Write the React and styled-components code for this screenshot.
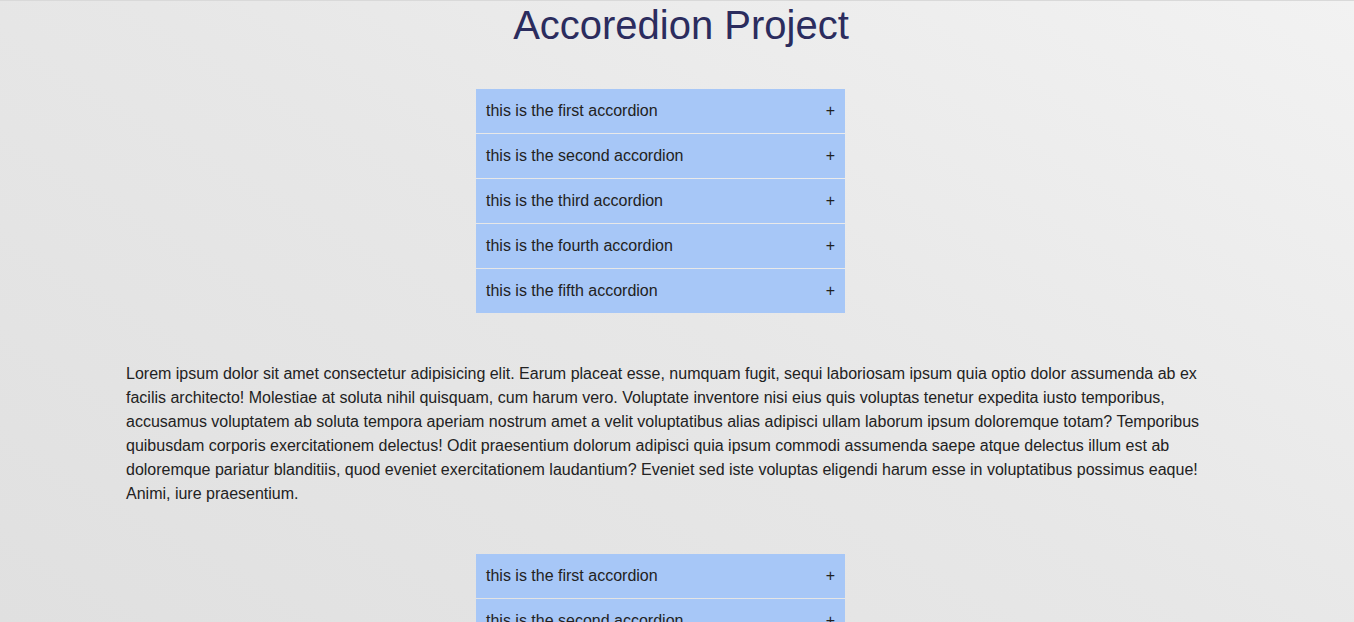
import React, { useState } from "react";
import styled, { createGlobalStyle } from "styled-components";

const GlobalStyle = createGlobalStyle`
  html {
    min-height: 100%;
    background: linear-gradient(30deg, #e0e0e0 0%, #e7e7e7 50%, #f2f2f2 100%);
    background-attachment: fixed;
  }
  body {
    margin: 0;
    border-top: 1px solid #d9d9d9;
    font-family: "Liberation Sans", Arial, sans-serif;
    color: #222;
  }
  ::-webkit-scrollbar {
    width: 4px;
    background: transparent;
  }
  ::-webkit-scrollbar-thumb {
    background: #bdbdbd;
  }
`;

const Page = styled.main`
  padding: 0 126px 60px;
`;

const Title = styled.h1`
  margin: 0;
  padding-left: 8px;
  text-align: center;
  font-size: 40px;
  font-weight: 400;
  line-height: 48px;
  color: #2b2c5e;
`;

const AccordionList = styled.section`
  width: 369px;
  margin: ${(p) => p.$top}px 0 0 350px;
  display: flex;
  flex-direction: column;
  gap: 1px;
`;

const Item = styled.div`
  background: #a7c7f7;
`;

const Header = styled.button`
  width: 100%;
  height: 44px;
  display: flex;
  align-items: center;
  justify-content: space-between;
  padding: 0 10px;
  border: 0;
  background: transparent;
  font-family: inherit;
  font-size: 16px;
  color: #222;
  cursor: pointer;
  text-align: left;
`;

const Sign = styled.span`
  font-size: 16px;
`;

const Body = styled.div`
  padding: 0 10px 12px;
  font-size: 15px;
  line-height: 22px;
`;

const Text = styled.p`
  margin: 49px 0 0;
  font-size: 16px;
  line-height: 24px;
  color: #222;
`;

const names = ["first", "second", "third", "fourth", "fifth"];

function Accordion({ top }) {
  const [open, setOpen] = useState(null);
  return (
    <AccordionList $top={top}>
      {names.map((n, i) => (
        <Item key={n}>
          <Header onClick={() => setOpen(open === i ? null : i)}>
            this is the {n} accordion
            <Sign>{open === i ? "−" : "+"}</Sign>
          </Header>
          {open === i && (
            <Body>Lorem ipsum dolor sit amet consectetur adipisicing elit.</Body>
          )}
        </Item>
      ))}
    </AccordionList>
  );
}

export default function App() {
  return (
    <>
      <GlobalStyle />
      <Page>
        <Title>Accoredion Project</Title>
        <Accordion top={40} />
        <Text>
          Lorem ipsum dolor sit amet consectetur adipisicing elit. Earum placeat
          esse, numquam fugit, sequi laboriosam ipsum quia optio dolor assumenda
          ab ex facilis architecto! Molestiae at soluta nihil quisquam, cum harum
          vero. Voluptate inventore nisi eius quis voluptas tenetur expedita iusto
          temporibus, accusamus voluptatem ab soluta tempora aperiam nostrum amet
          a velit voluptatibus alias adipisci ullam laborum ipsum doloremque
          totam? Temporibus quibusdam corporis exercitationem delectus! Odit
          praesentium dolorum adipisci quia ipsum commodi assumenda saepe atque
          delectus illum est ab doloremque pariatur blanditiis, quod eveniet
          exercitationem laudantium? Eveniet sed iste voluptas eligendi harum esse
          in voluptatibus possimus eaque! Animi, iure praesentium.
        </Text>
        <Accordion top={48} />
      </Page>
    </>
  );
}
